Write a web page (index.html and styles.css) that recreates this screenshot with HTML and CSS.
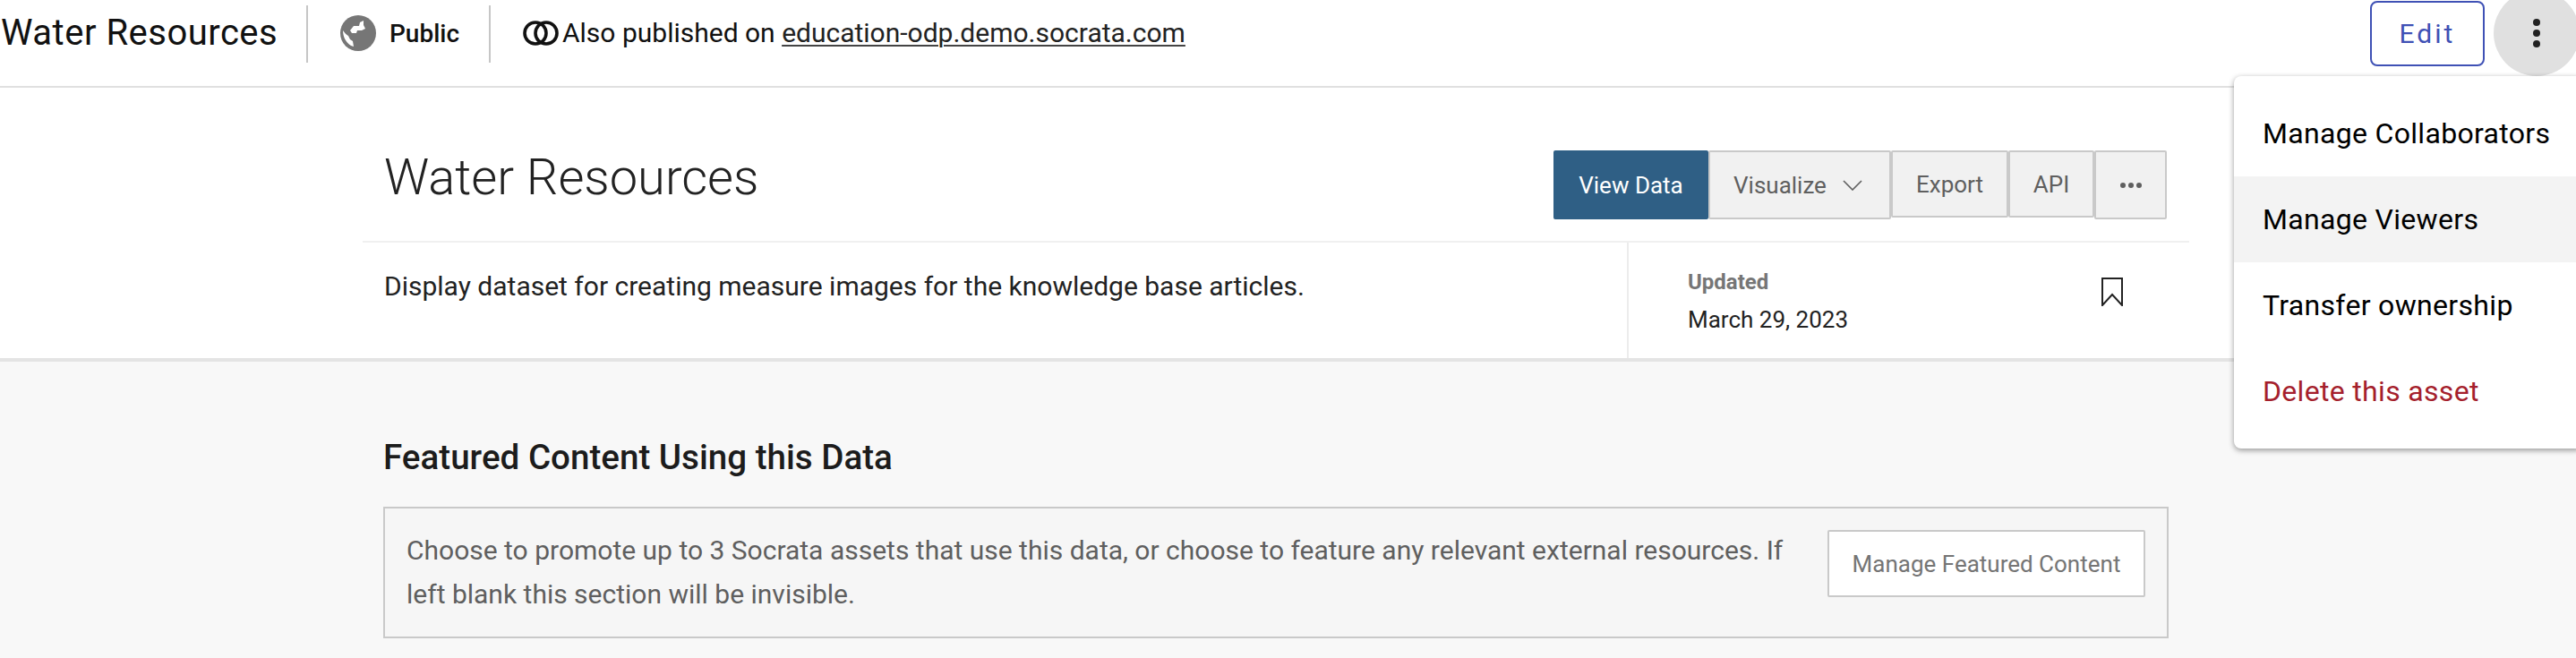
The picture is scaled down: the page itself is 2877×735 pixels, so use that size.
FILE: index.html
```html
<!DOCTYPE html>
<html lang="en">
<head>
<meta charset="utf-8">
<title>Water Resources</title>
<link rel="stylesheet" href="styles.css">
</head>
<body>
<header class="topbar">
  <div class="topbar-title">Water Resources</div>
  <div class="topbar-sep"></div>
  <div class="audience">
    <svg class="globe" viewBox="0 0 40 40" aria-hidden="true"><circle cx="20" cy="20" r="20" fill="#767676"/><path d="M26 6 L26 11 L28 15 L24 17 L19 17 L18 20 L13 20 L11 17 L15 12 L21 12 L22 8 Z" fill="#fff"/><path d="M3 17 C5 20 7 22 9 23 L11 27 L14 29 L15 35 L12 34 C6 30 3 24 3 17 Z" fill="#fff"/></svg>
    <span class="audience-label">Public</span>
  </div>
  <div class="topbar-sep"></div>
  <div class="published">
    <svg class="rings" viewBox="0 0 40 28" aria-hidden="true"><circle cx="14" cy="14" r="12" fill="none" stroke="#111" stroke-width="3.6"/><circle cx="26" cy="14" r="12" fill="none" stroke="#111" stroke-width="3.6"/></svg>
    <span class="published-text">Also published on <a class="published-link" href="#">education-odp.demo.socrata.com</a></span>
  </div>
  <button class="edit-btn">Edit</button>
  <div class="kebab">
    <span class="kebab-dot"></span><span class="kebab-dot"></span><span class="kebab-dot"></span>
  </div>
</header>

<ul class="menu">
  <li class="menu-item">Manage Collaborators</li>
  <li class="menu-item menu-item-hover">Manage Viewers</li>
  <li class="menu-item">Transfer ownership</li>
  <li class="menu-item menu-item-danger">Delete this asset</li>
</ul>

<section class="hero">
  <div class="hero-inner">
    <div class="hero-head">
      <h1 class="hero-title">Water Resources</h1>
      <div class="actions">
        <button class="action action-primary">View Data</button>
        <button class="action action-visualize">Visualize
          <svg class="chevron" viewBox="0 0 22 12" aria-hidden="true"><path d="M1 1 L11 11 L21 1" fill="none" stroke="#5f5f5f" stroke-width="1.6"/></svg>
        </button>
        <button class="action action-export">Export</button>
        <button class="action action-api">API</button>
        <button class="action action-more"><span class="more-dot"></span><span class="more-dot"></span><span class="more-dot"></span></button>
      </div>
    </div>
    <div class="hero-body">
      <p class="hero-desc">Display dataset for creating measure images for the knowledge base articles.</p>
      <div class="hero-meta">
        <div class="meta-text">
          <div class="meta-label">Updated</div>
          <div class="meta-value">March 29, 2023</div>
        </div>
        <svg class="bookmark" viewBox="0 0 24 32" aria-hidden="true"><path d="M1 1 H23 V31 L12 19 L1 31 Z" fill="none" stroke="#222" stroke-width="2"/></svg>
      </div>
    </div>
  </div>
</section>

<section class="featured">
  <h2 class="featured-title">Featured Content Using this Data</h2>
  <div class="featured-box">
    <p class="featured-text">Choose to promote up to 3 Socrata assets that use this data, or choose to feature any relevant external resources. If left blank this section will be invisible.</p>
    <button class="featured-btn">Manage Featured Content</button>
  </div>
</section>
</body>
</html>
```
FILE: styles.css
```css
* { box-sizing: border-box; }
html, body { margin: 0; padding: 0; }
body {
  width: 2877px;
  height: 735px;
  overflow: hidden;
  position: relative;
  background: #f8f8f8;
  color: #111;
  font-family: Roboto, "Liberation Sans", sans-serif;
}
button { font-family: inherit; cursor: pointer; }

.topbar {
  display: flex;
  align-items: flex-start;
  height: 98px;
  background: #fff;
  border-bottom: 2px solid #e0e0e0;
}
.topbar-title {
  margin: 13px 0 0 1px;
  width: 341px;
  font-size: 40px;
  line-height: 48px;
  letter-spacing: .5px;
  color: #111;
}
.topbar-sep {
  width: 2px;
  height: 64px;
  margin-top: 6px;
  background: #c6c6c6;
}
.audience {
  display: flex;
  align-items: center;
  width: 202px;
  height: 40px;
  margin-top: 17px;
  padding-left: 36px;
}
.globe { width: 40px; height: 40px; flex: none; }
.audience-label {
  margin-left: 15px;
  font-size: 28px;
  font-weight: 500;
}
.published {
  display: flex;
  align-items: center;
  flex: 1;
  margin-top: 17px;
  height: 40px;
  padding-left: 36px;
  font-size: 30px;
}
.rings { width: 40px; height: 28px; flex: none; margin-right: 4px; }
.published-text { margin-top: -2px; }
.published-link {
  color: #222;
  text-decoration: underline;
  text-decoration-color: #444;
  text-underline-offset: 3px;
  text-decoration-thickness: 1.5px;
}
.edit-btn {
  width: 128px;
  height: 73px;
  margin-top: 1px;
  background: #fff;
  border: 2px solid #3f51b5;
  border-radius: 8px;
  color: #3f51b5;
  font-size: 30px;
  letter-spacing: 3px;
}
.kebab {
  flex: none;
  display: flex;
  flex-direction: column;
  align-items: center;
  justify-content: center;
  gap: 4px;
  width: 96px;
  height: 96px;
  margin: -11px -4px 0 10px;
  border-radius: 50%;
  background: #e0e0e0;
}
.kebab-dot { width: 8px; height: 8px; border-radius: 50%; background: #222; }

.menu {
  position: absolute;
  top: 85px;
  left: 2495px;
  width: 390px;
  margin: 0;
  padding: 16px 0;
  list-style: none;
  background: #fff;
  border-radius: 8px;
  box-shadow: 0 2px 6px rgba(0, 0, 0, .4);
  z-index: 2;
}
.menu-item {
  height: 96px;
  padding-left: 32px;
  font-size: 32px;
  line-height: 96px;
  letter-spacing: .32px;
  color: #000;
}
.menu-item-hover { background: #f3f3f3; }
.menu-item-danger { color: #a51f2d; }

.hero {
  height: 306px;
  background: #fff;
  border-bottom: 4px solid #e4e4e4;
}
.hero-inner { width: 2040px; margin-left: 405px; }
.hero-head {
  display: flex;
  justify-content: space-between;
  align-items: flex-start;
  height: 173px;
  padding: 70px 25px 0 24px;
  border-bottom: 2px solid #f0f0f0;
}
.hero-title {
  margin: 0;
  font-size: 56px;
  line-height: 60px;
  font-weight: 300;
  color: #222;
}
.actions { display: flex; align-items: flex-start; }
.action {
  height: 77px;
  padding: 0;
  background: #f1f1f1;
  border: 2px solid #c9c9c9;
  border-radius: 2px;
  color: #5f5f5f;
  font-size: 26px;
}
.action-primary { width: 173px; background: #2f5f85; border-color: #2f5f85; color: #fff; }
.action-visualize { width: 204px; display: flex; align-items: center; padding-left: 26px; }
.chevron { width: 22px; height: 12px; margin-left: 18px; }
.action-export { width: 131px; height: 75px; }
.action-api { width: 96px; height: 75px; }
.action-more { width: 81px; height: 77px; display: flex; align-items: center; justify-content: center; gap: 3px; }
.more-dot { width: 6px; height: 6px; border-radius: 50%; background: #5f5f5f; }
.hero-body { display: flex; height: 129px; }
.hero-desc {
  width: 1412px;
  margin: 0;
  padding: 29px 0 0 24px;
  font-size: 30px;
  line-height: 40px;
  color: #222;
}
.hero-meta {
  flex: 1;
  display: flex;
  align-items: flex-start;
  justify-content: space-between;
  padding: 28px 74px 0 66px;
  border-left: 2px solid #ececec;
}
.meta-label { font-size: 24px; line-height: 32px; font-weight: 700; color: #767676; }
.meta-value { margin-top: 10px; font-size: 26px; line-height: 32px; color: #222; }
.bookmark { width: 24px; height: 32px; margin-top: 11px; }

.featured { padding: 85px 455px 0 428px; }
.featured-title {
  margin: 0;
  font-size: 38.6px;
  line-height: 44px;
  font-weight: 500;
  color: #1c1c1c;
}
.featured-box {
  display: flex;
  align-items: flex-start;
  justify-content: space-between;
  height: 147px;
  margin-top: 33px;
  padding: 24px 24px 0 24px;
  background: #f6f6f6;
  border: 2px solid #c9c9c9;
}
.featured-text {
  width: 1580px;
  margin: -2px 0 0;
  font-size: 30px;
  line-height: 49px;
  color: #5f5f5f;
}
.featured-btn {
  width: 355px;
  height: 75px;
  background: #fff;
  border: 2px solid #c9c9c9;
  border-radius: 2px;
  color: #757575;
  font-size: 26px;
}
```
